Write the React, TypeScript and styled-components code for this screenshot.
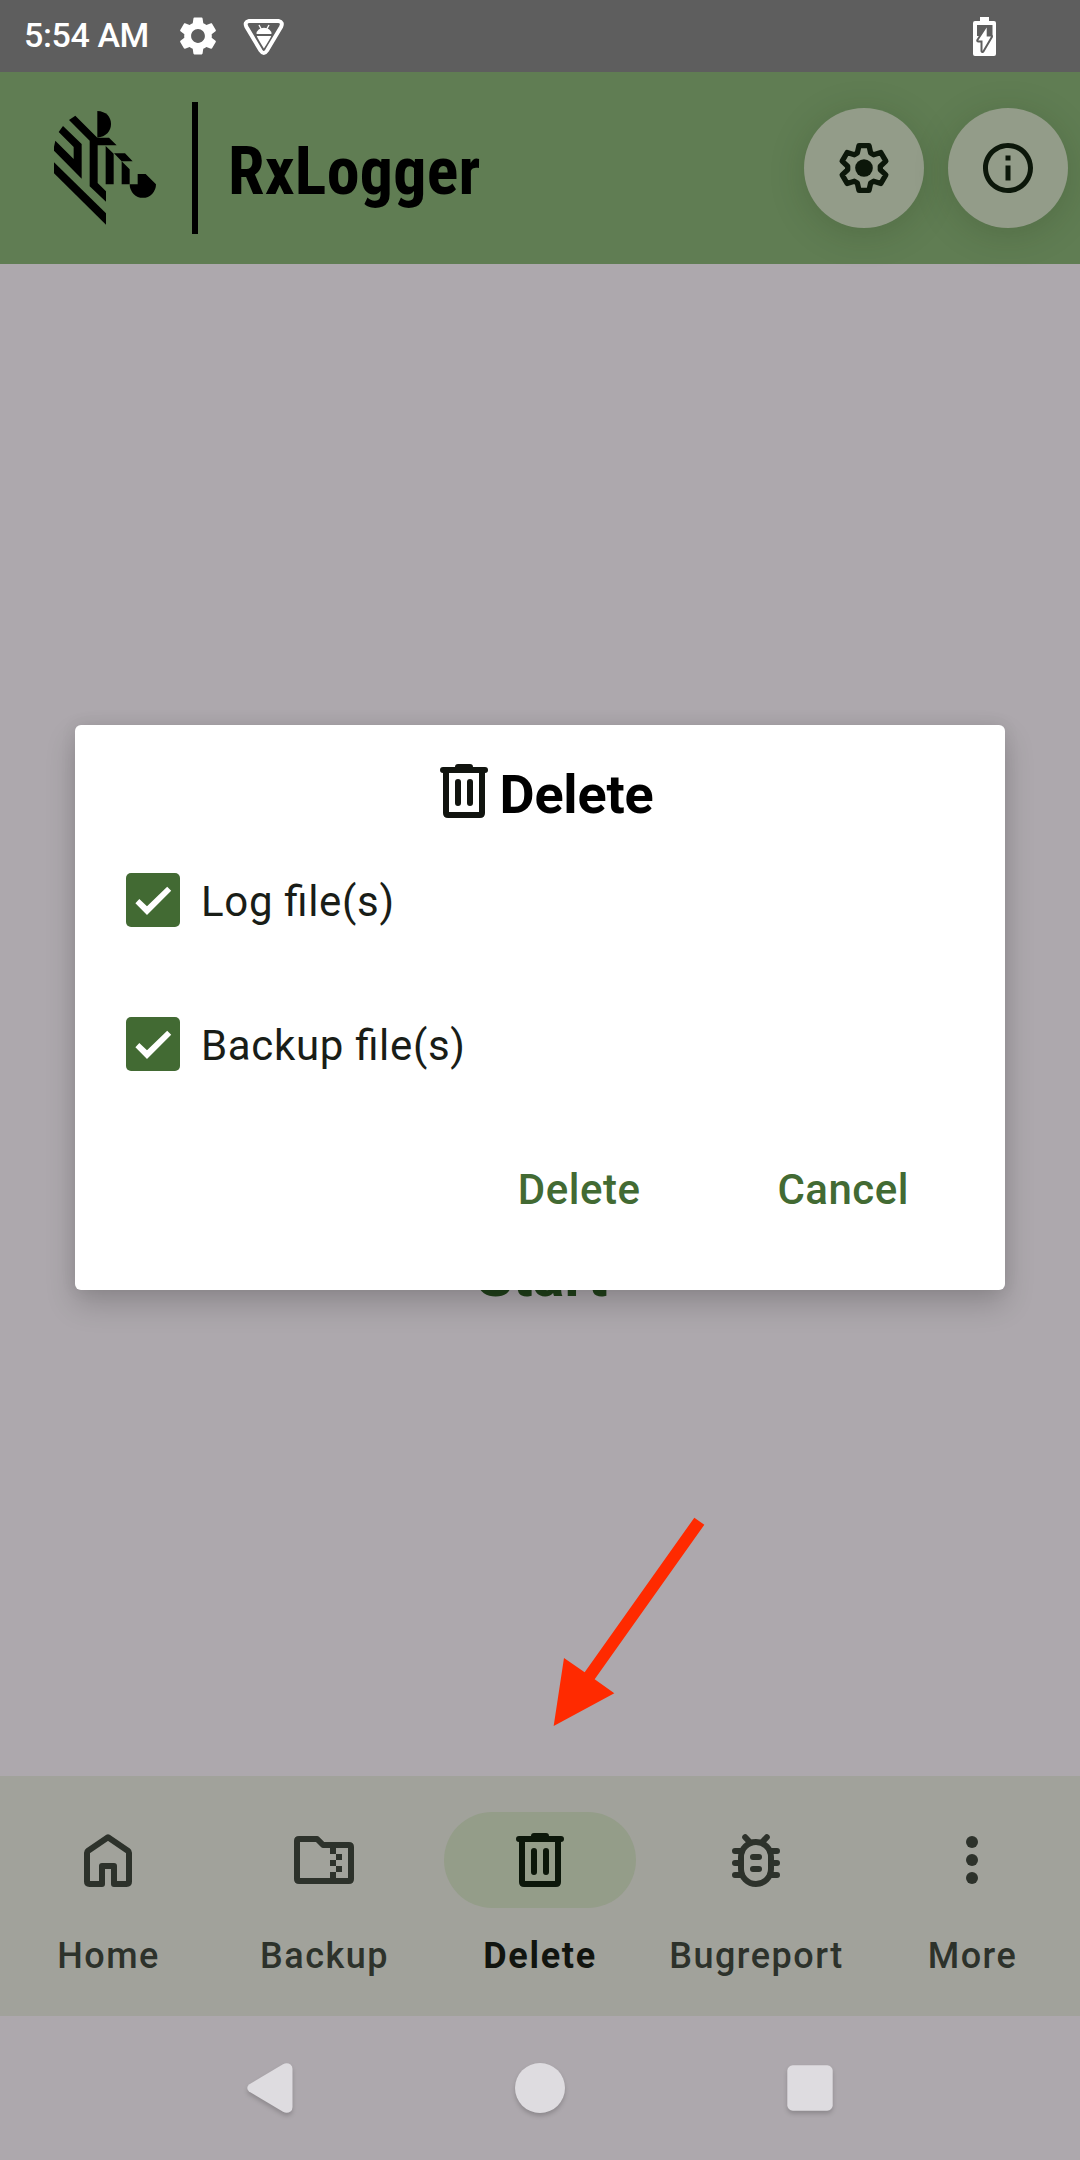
import React, { useState } from "react";
import styled, { createGlobalStyle } from "styled-components";

const GlobalStyle = createGlobalStyle`
  *, *::before, *::after { box-sizing: border-box; }
  body { margin: 0; font-family: Roboto, "Liberation Sans", sans-serif; }
  button { font-family: inherit; border: 0; padding: 0; background: none; }
`;

const Screen = styled.div`
  position: relative;
  width: 1080px;
  height: 2160px;
  display: flex;
  flex-direction: column;
  overflow: hidden;
  background: #ada8ad;
`;

const StatusBar = styled.div`
  height: 72px;
  display: flex;
  align-items: center;
  padding: 0 84px 0 24px;
  background: #5e5e5e;
  color: #fff;
`;

const Clock = styled.span`
  width: 151px;
  font-size: 34px;
  font-weight: 500;
  letter-spacing: -0.4px;
  line-height: 70px;
  padding-bottom: 2px;
  white-space: nowrap;
`;

const StatusIcons = styled.div`
  flex: 1;
  display: flex;
  align-items: center;
  gap: 20px;
`;

const AppHeader = styled.header`
  height: 192px;
  display: flex;
  align-items: center;
  padding: 0 12px 0 54px;
  background: #607d53;
`;

const Divider = styled.div`
  width: 6px;
  height: 132px;
  margin: 0 30px 0 36px;
  background: #000;
`;

const AppName = styled.h1`
  flex: 1;
  margin: 0;
  padding-top: 8px;
  font-family: "Roboto Condensed", Roboto, sans-serif;
  font-stretch: condensed;
  font-size: 66px;
  font-weight: 700;
  letter-spacing: 0.25px;
  line-height: 78px;
  color: #000;
`;

const HeaderActions = styled.div`
  display: flex;
  gap: 24px;
`;

const RoundButton = styled.button`
  width: 120px;
  height: 120px;
  display: grid;
  place-items: center;
  border-radius: 50%;
  background: #939c89;
  color: #0c170a;
  box-shadow: 0 6px 36px rgba(30, 50, 20, 0.2);
`;

const Content = styled.main`
  flex: 1;
  display: flex;
  flex-direction: column;
  align-items: center;
  padding-top: 976px;
`;

const StartButton = styled.button`
  padding-left: 4px;
  font-size: 59px;
  font-weight: 700;
  line-height: 71px;
  color: #20401a;
`;

const BottomNav = styled.nav`
  height: 240px;
  display: grid;
  grid-template-columns: repeat(5, 216px);
  background: #a1a29b;
`;

const NavItem = styled.button<{ $active?: boolean }>`
  display: flex;
  flex-direction: column;
  align-items: center;
  padding-top: 36px;
  gap: 26px;
  font-size: 36px;
  line-height: 44px;
  letter-spacing: ${(p) => (p.$active ? 1.7 : 1.5)}px;
  font-weight: ${(p) => (p.$active ? 700 : 500)};
  color: ${(p) => (p.$active ? "#11140f" : "#2d322b")};
`;

const NavLabel = styled.span<{ $active?: boolean }>`
  padding-left: ${(p) => (p.$active ? 0 : 1)}px;
`;

const NavPill = styled.span<{ $active?: boolean }>`
  width: 192px;
  height: 96px;
  display: grid;
  place-items: center;
  border-radius: 48px;
  background: ${(p) => (p.$active ? "#949d89" : "transparent")};
  color: ${(p) => (p.$active ? "#0c170a" : "#2d322b")};
`;

const SystemNav = styled.div`
  height: 144px;
  display: flex;
  justify-content: center;
  align-items: center;
  color: #dedce0;
`;

const SystemKey = styled.button`
  width: 270px;
  height: 144px;
  display: grid;
  place-items: center;
  color: inherit;
  svg { filter: drop-shadow(0 3px 2px rgba(0, 0, 0, 0.18)); }
`;

const Dialog = styled.section`
  position: absolute;
  left: 75px;
  top: 725px;
  width: 930px;
  height: 565px;
  display: flex;
  flex-direction: column;
  padding: 30px 50px 0 51px;
  border-radius: 6px;
  background: #fff;
  box-shadow: 0 14px 30px rgba(0, 0, 0, 0.18), 0 0 16px rgba(0, 0, 0, 0.08);
`;

const DialogTitle = styled.h2`
  height: 76px;
  margin: 0 0 42px;
  display: flex;
  justify-content: center;
  font-size: 54px;
  line-height: 79px;
  letter-spacing: -0.2px;
  font-weight: 700;
  color: #000;
`;

const TitleIcon = styled.span`
  height: 72px;
  display: flex;
  color: #11140f;
`;

const CheckRow = styled.label`
  height: 54px;
  margin-bottom: 90px;
  display: flex;
  align-items: center;
  gap: 21px;
  font-size: 42px;
  line-height: 54px;
  letter-spacing: 0.67px;
  font-feature-settings: "liga" 1;
  color: #191d17;
`;

const CheckLabel = styled.span`
  padding-top: 3px;
`;

const CheckBox = styled.button<{ $on: boolean }>`
  width: 54px;
  height: 54px;
  display: flex;
  border-radius: 5px;
  background: ${(p) => (p.$on ? "#426a33" : "#fff")};
  box-shadow: ${(p) => (p.$on ? "none" : "inset 0 0 0 5px #43483f")};
`;

const DialogActions = styled.div`
  display: flex;
  justify-content: flex-end;
  gap: 137px;
  margin-top: 2px;
  padding-right: 46px;
`;

const TextButton = styled.button`
  font-size: 42px;
  line-height: 54px;
  font-weight: 500;
  letter-spacing: 0.5px;
  color: #426a33;
`;

const Pointer = styled.svg`
  position: absolute;
  left: 530px;
  top: 1500px;
  width: 200px;
  height: 240px;
`;

const SolidGear = () => (
  <svg width="46" height="46" viewBox="0 0 24 24" fill="currentColor">
    <path d="M19.14 12.94c.04-.3.06-.61.06-.94 0-.32-.02-.64-.07-.94l2.03-1.58c.18-.14.23-.41.12-.61l-1.92-3.32c-.12-.22-.37-.29-.59-.22l-2.39.96c-.5-.38-1.03-.7-1.62-.94L14.4 2.81c-.04-.24-.24-.41-.48-.41h-3.84c-.24 0-.43.17-.47.41l-.36 2.54c-.59.24-1.13.57-1.62.94l-2.39-.96c-.22-.08-.47 0-.59.22L2.74 8.87c-.12.21-.08.47.12.61l2.03 1.58c-.05.3-.09.63-.09.94s.02.64.07.94l-2.03 1.58c-.18.14-.23.41-.12.61l1.92 3.32c.12.22.37.29.59.22l2.39-.96c.5.38 1.03.7 1.62.94l.36 2.54c.05.24.24.41.48.41h3.84c.24 0 .44-.17.47-.41l.36-2.54c.59-.24 1.13-.56 1.62-.94l2.39.96c.22.08.47 0 .59-.22l1.92-3.32c.12-.22.07-.47-.12-.61l-2.01-1.58zM12 15.6c-1.98 0-3.6-1.62-3.6-3.6s1.62-3.6 3.6-3.6 3.6 1.62 3.6 3.6-1.62 3.6-3.6 3.6z" />
  </svg>
);

const BugShield = () => (
  <svg width="45" height="45" viewBox="0 0 45 45">
    <path d="M8 7H37.500Q42.500 8 40 13L26 36.500Q22.800 41.500 19.500 36.500L5.500 13Q3 8 8 7Z" fill="none" stroke="#fff" strokeWidth="4" strokeLinejoin="round" />
    <path d="M15.500 20a7.500 6.200 0 0 1 15 0zM15.800 22H30.200Q29 25 22.900 34.500Q17 25 15.800 22Z" fill="#fff" />
    <path d="M18 11l2.200 4M28 11l-2.200 4" stroke="#fff" strokeWidth="1.400" />
  </svg>
);

const ChargingBattery = () => (
  <svg width="23" height="39" viewBox="0 0 23 39">
    <path d="M7 0H16V4H21Q23 4 23 6V37Q23 39 21 39H2Q0 39 0 37V6Q0 4 2 4H7Z" fill="#fff" />
    <path d="M4 8H19.500V19H4Z" fill="#5e5e5e" />
    <path
      d="M13.700 10.500V19.500H18L9.500 34V23.500H5.200Z"
      fill="#fff"
      stroke="#5e5e5e"
      strokeWidth="4"
      strokeLinejoin="round"
      paintOrder="stroke"
    />
  </svg>
);

const ZebraLogo = () => (
  <svg width="102" height="114" viewBox="72 63 306 342" fill="#000">
    <path d="M72 217L228 370V404L72 250Z" />
    <path d="M76 152L131 207V171L86 126L99 108L155 162V266L72 182V170Z" />
    <path d="M117 90L136 77L202 143H237L260 166H203V279L228 304V335L179 289V152Z" />
    <path d="M202 63C228 64 243 80 243 102C243 124 228 140 202 143Z" />
    <path d="M227 168L251 191V283H227ZM252 190H285L308 214H275ZM275 214L299 238V283H275Z" />
    <path d="M299 283H323V252H347L378 283A39 40 0 0 1 299 283Z" />
  </svg>
);

// One tooth of the outlined gear, repeated every 60 degrees.
const tooth = [[-20, -45], [-15, -67], [15, -67], [20, -45]];
const gearOutline = [0, 60, 120, 180, 240, 300]
  .flatMap((deg) => {
    const a = (deg * Math.PI) / 180;
    return tooth.map(([x, y]) =>
      `${(x * Math.cos(a) - y * Math.sin(a)).toFixed(1)},${(x * Math.sin(a) + y * Math.cos(a)).toFixed(1)}`
    );
  })
  .join(" ");

const GearIcon = () => (
  <svg width="60" height="60" viewBox="-90 -90 180 180">
    <polygon points={gearOutline} fill="none" stroke="currentColor" strokeWidth="16" strokeLinejoin="round" />
    <circle r="26.500" fill="currentColor" />
  </svg>
);

const InfoIcon = () => (
  <svg width="60" height="60" viewBox="0 0 24 24" fill="currentColor">
    <path d="M11 7h2v2h-2zm0 4h2v6h-2zm1-9C6.480 2 2 6.480 2 12s4.480 10 10 10 10-4.480 10-10S17.520 2 12 2zm0 18c-4.410 0-8-3.590-8-8s3.590-8 8-8 8 3.590 8 8-3.590 8-8 8z" />
  </svg>
);

const TrashIcon = () => (
  <svg width="72" height="72" viewBox="0 0 24 24" fill="none" stroke="currentColor" strokeWidth="2" strokeLinecap="round">
    <path d="M5 5H19M10 4H14M10 9V16M14 9V16" />
    <path d="M6 5V19.300Q6 20 6.700 20H17.300Q18 20 18 19.300V5" />
  </svg>
);

const HomeIcon = () => (
  <svg width="72" height="72" viewBox="0 0 24 24" fill="none" stroke="currentColor" strokeWidth="2" strokeLinejoin="round">
    <path d="M10 20H5.800Q5 20 5 19.200V9.600Q5 9.200 5.400 8.900L12 4.400L18.600 8.900Q19 9.200 19 9.600V19.200Q19 20 18.200 20H14V14H10Z" />
  </svg>
);

const FolderZipIcon = () => (
  <svg width="72" height="72" viewBox="0 0 24 24" fill="none" stroke="currentColor" strokeWidth="2" strokeLinejoin="round">
    <path d="M3.700 5H9.700L11.700 7H20.300Q21 7 21 7.700V18.300Q21 19 20.300 19H3.700Q3 19 3 18.300V5.700Q3 5 3.700 5Z" />
    <path d="M14 8h2v2h2v2h-2v2h2v2h-2v2h-2v-2h2v-2h-2v-2h2v-2h-2z" fill="currentColor" stroke="none" />
  </svg>
);

const BugIcon = () => (
  <svg width="72" height="72" viewBox="0 0 24 24" fill="none" stroke="currentColor" strokeWidth="2" strokeLinecap="round">
    <rect x="7" y="6" width="10" height="14" rx="5" />
    <path d="M5 9H7.300M16.700 9H19M5 13H7M17 13H19M5 17H7.300M16.700 17H19M11 11H13M11 15H13M8.400 4.400L9.900 6M15.600 4.400L14.100 6" />
  </svg>
);

const MoreIcon = () => (
  <svg width="72" height="72" viewBox="0 0 24 24" fill="currentColor">
    <circle cx="12" cy="6" r="2" />
    <circle cx="12" cy="12" r="2" />
    <circle cx="12" cy="18" r="2" />
  </svg>
);

const CheckMark = () => (
  <svg width="54" height="54" viewBox="0 0 54 54" fill="#fff">
    <path d="M9.400 30.300L13.300 26L21 33.200L41.200 13.800L45.200 17.700L21 42Z" />
  </svg>
);

const tabs = [
  { label: "Home", Icon: HomeIcon },
  { label: "Backup", Icon: FolderZipIcon },
  { label: "Delete", Icon: TrashIcon },
  { label: "Bugreport", Icon: BugIcon },
  { label: "More", Icon: MoreIcon },
];

const targets = ["Log file(s)", "Backup file(s)"];

export default function App() {
  const [activeTab, setActiveTab] = useState("Delete");
  const [selected, setSelected] = useState<string[]>(targets);

  const toggle = (name: string) =>
    setSelected((list) => (list.includes(name) ? list.filter((n) => n !== name) : [...list, name]));

  return (
    <>
      <GlobalStyle />
      <Screen>
        <StatusBar>
          <Clock>5:54 AM</Clock>
          <StatusIcons>
            <SolidGear />
            <BugShield />
          </StatusIcons>
          <ChargingBattery />
        </StatusBar>
        <AppHeader>
          <ZebraLogo />
          <Divider />
          <AppName>RxLogger</AppName>
          <HeaderActions>
            <RoundButton><GearIcon /></RoundButton>
            <RoundButton><InfoIcon /></RoundButton>
          </HeaderActions>
        </AppHeader>
        <Content>
          <StartButton>Start</StartButton>
        </Content>
        <BottomNav>
          {tabs.map(({ label, Icon }) => (
            <NavItem key={label} $active={label === activeTab} onClick={() => setActiveTab(label)}>
              <NavPill $active={label === activeTab}><Icon /></NavPill>
              <NavLabel $active={label === activeTab}>{label}</NavLabel>
            </NavItem>
          ))}
        </BottomNav>
        <SystemNav>
          <SystemKey>
            <svg width="46" height="50" viewBox="0 0 46 50" fill="currentColor">
              <path d="M2 21.500L36 1.300Q40 -.8 43.500 1.500Q45.500 3 45.500 6V44Q45.500 47 43.500 48.500Q40 50.800 36 48.700L2 28.500Q-1.500 25 2 21.500Z" />
            </svg>
          </SystemKey>
          <SystemKey>
            <svg width="50" height="50" viewBox="0 0 50 50" fill="currentColor">
              <circle cx="25" cy="25" r="25" />
            </svg>
          </SystemKey>
          <SystemKey>
            <svg width="46" height="46" viewBox="0 0 46 46" fill="currentColor">
              <rect x="0.300" y="0.300" width="45.400" height="45.400" rx="5.500" />
            </svg>
          </SystemKey>
        </SystemNav>
        <Pointer viewBox="0 0 600 720" fill="#ff2a00">
          <path d="M493 53L523 74L194 538L253 580L71 678L102 474L164 517Z" />
        </Pointer>
        <Dialog>
          <DialogTitle>
            <TitleIcon><TrashIcon /></TitleIcon>
            Delete
          </DialogTitle>
          {targets.map((name) => (
            <CheckRow key={name}>
              <CheckBox $on={selected.includes(name)} onClick={() => toggle(name)}>
                {selected.includes(name) && <CheckMark />}
              </CheckBox>
              <CheckLabel>{name}</CheckLabel>
            </CheckRow>
          ))}
          <DialogActions>
            <TextButton>Delete</TextButton>
            <TextButton>Cancel</TextButton>
          </DialogActions>
        </Dialog>
      </Screen>
    </>
  );
}
